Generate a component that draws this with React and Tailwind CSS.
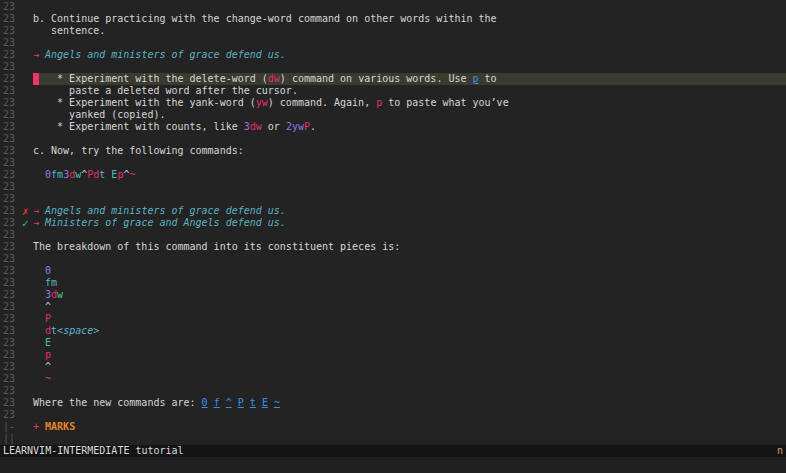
import React from "react";

const fg = "text-[#d6d6d6]";
const pink = "text-[#e8336f]";
const quote = "text-[#5ab2c6] italic";
const red = "text-[#e02e68]";
const purple = "text-[#9a72e6]";
const teal = "text-[#56b6cc]";
const green = "text-[#4cbfa4]";
const caret = "text-[#b4c4e4]";
const link = "text-[#3b8fe6] underline";
const orange = "text-[#e8842a] font-bold";

// each line: { num, sign, cursor, hl, segs: [[text, cls]] }
const lines = [
  { segs: [] },
  { segs: [["b. Continue practicing with the change-word command on other words within the", fg]] },
  { segs: [["   sentence.", fg]] },
  { segs: [] },
  { segs: [["→ ", pink], ["Angels and ministers of grace defend us.", quote]] },
  { segs: [] },
  {
    hl: true,
    cursor: true,
    segs: [
      ["    * Experiment with the delete-word (", fg],
      ["dw", red],
      [") command on various words. Use ", fg],
      ["p", link],
      [" to", fg],
    ],
  },
  { segs: [["      paste a deleted word after the cursor.", fg]] },
  {
    segs: [
      ["    * Experiment with the yank-word (", fg],
      ["yw", red],
      [") command. Again, ", fg],
      ["p", red],
      [" to paste what you’ve", fg],
    ],
  },
  { segs: [["      yanked (copied).", fg]] },
  {
    segs: [
      ["    * Experiment with counts, like ", fg],
      ["3", purple],
      ["dw", red],
      [" or ", fg],
      ["2yw", purple],
      ["P", red],
      [".", fg],
    ],
  },
  { segs: [] },
  { segs: [["c. Now, try the following commands:", fg]] },
  { segs: [] },
  {
    segs: [
      ["  ", fg],
      ["0", purple],
      ["fm", teal],
      ["3", purple],
      ["d", red],
      ["w", green],
      ["^", caret],
      ["Pd", red],
      ["t ", teal],
      ["E", teal],
      ["p", red],
      ["^", caret],
      ["~", red],
    ],
  },
  { segs: [] },
  { segs: [] },
  { sign: "x", segs: [["→ ", pink], ["Angels and ministers of grace defend us.", quote]] },
  { sign: "v", segs: [["→ ", pink], ["Ministers of grace and Angels defend us.", quote]] },
  { segs: [] },
  { segs: [["The breakdown of this command into its constituent pieces is:", fg]] },
  { segs: [] },
  { segs: [["  ", fg], ["0", purple]] },
  { segs: [["  ", fg], ["fm", teal]] },
  { segs: [["  ", fg], ["3", purple], ["d", red], ["w", green]] },
  { segs: [["  ", fg], ["^", caret]] },
  { segs: [["  ", fg], ["P", red]] },
  { segs: [["  ", fg], ["d", red], ["t", teal], ["<space>", quote]] },
  { segs: [["  ", fg], ["E", green]] },
  { segs: [["  ", fg], ["p", red]] },
  { segs: [["  ", fg], ["^", caret]] },
  { segs: [["  ", fg], ["~", red]] },
  { segs: [] },
  {
    segs: [
      ["Where the new commands are: ", fg],
      ["0", link],
      [" ", fg],
      ["f", link],
      [" ", fg],
      ["^", link],
      [" ", fg],
      ["P", link],
      [" ", fg],
      ["t", link],
      [" ", fg],
      ["E", link],
      [" ", fg],
      ["~", link],
    ],
  },
  { segs: [] },
  { num: "|-", segs: [["+ ", pink], ["MARKS", orange]] },
  { num: "||", segs: [] },
];

const Row = ({ line }) => (
  <div className="flex h-[12px] leading-[12px]">
    <div className="w-[22px] pl-[3px] bg-[#232323] text-[#595959] whitespace-pre">
      {line.num || "23"}
    </div>
    <div className="w-[11px] h-[12px] bg-[#232323] flex items-center overflow-hidden text-[11px] leading-[11px]">
      {line.sign === "x" && <span className="text-[#e0342e]">✗</span>}
      {line.sign === "v" && <span className="text-[#32c46a]">✓</span>}
    </div>
    <div
      className={
        "flex-1 flex whitespace-pre " + (line.hl ? "bg-[#3a3a2f]" : "")
      }
    >
      {line.cursor && <span className="w-[6px] h-[12px] bg-[#f0346e] -mr-[6px]" />}
      {line.segs.map(([t, c], i) => (
        <span key={i} className={c}>
          {t}
        </span>
      ))}
    </div>
  </div>
);

export default function App() {
  return (
    <div
      className="w-[786px] h-[473px] overflow-hidden bg-[#1f1f1f] flex flex-col text-[10px]"
      style={{ fontFamily: '"DejaVu Sans Mono", monospace' }}
    >
      <div className="flex flex-col pt-[1px] bg-[#232323]">
        {lines.map((l, i) => (
          <Row key={i} line={l} />
        ))}
      </div>
      <div className="h-[12px] leading-[12px] bg-[#141414] flex justify-between pl-[3px] pr-[3px] text-[#dcdcdc]">
        <span>LEARNVIM-INTERMEDIATE tutorial</span>
        <span className="text-[#d8a060]">n</span>
      </div>
      <div className="flex-1 bg-[#202020]" />
    </div>
  );
}
